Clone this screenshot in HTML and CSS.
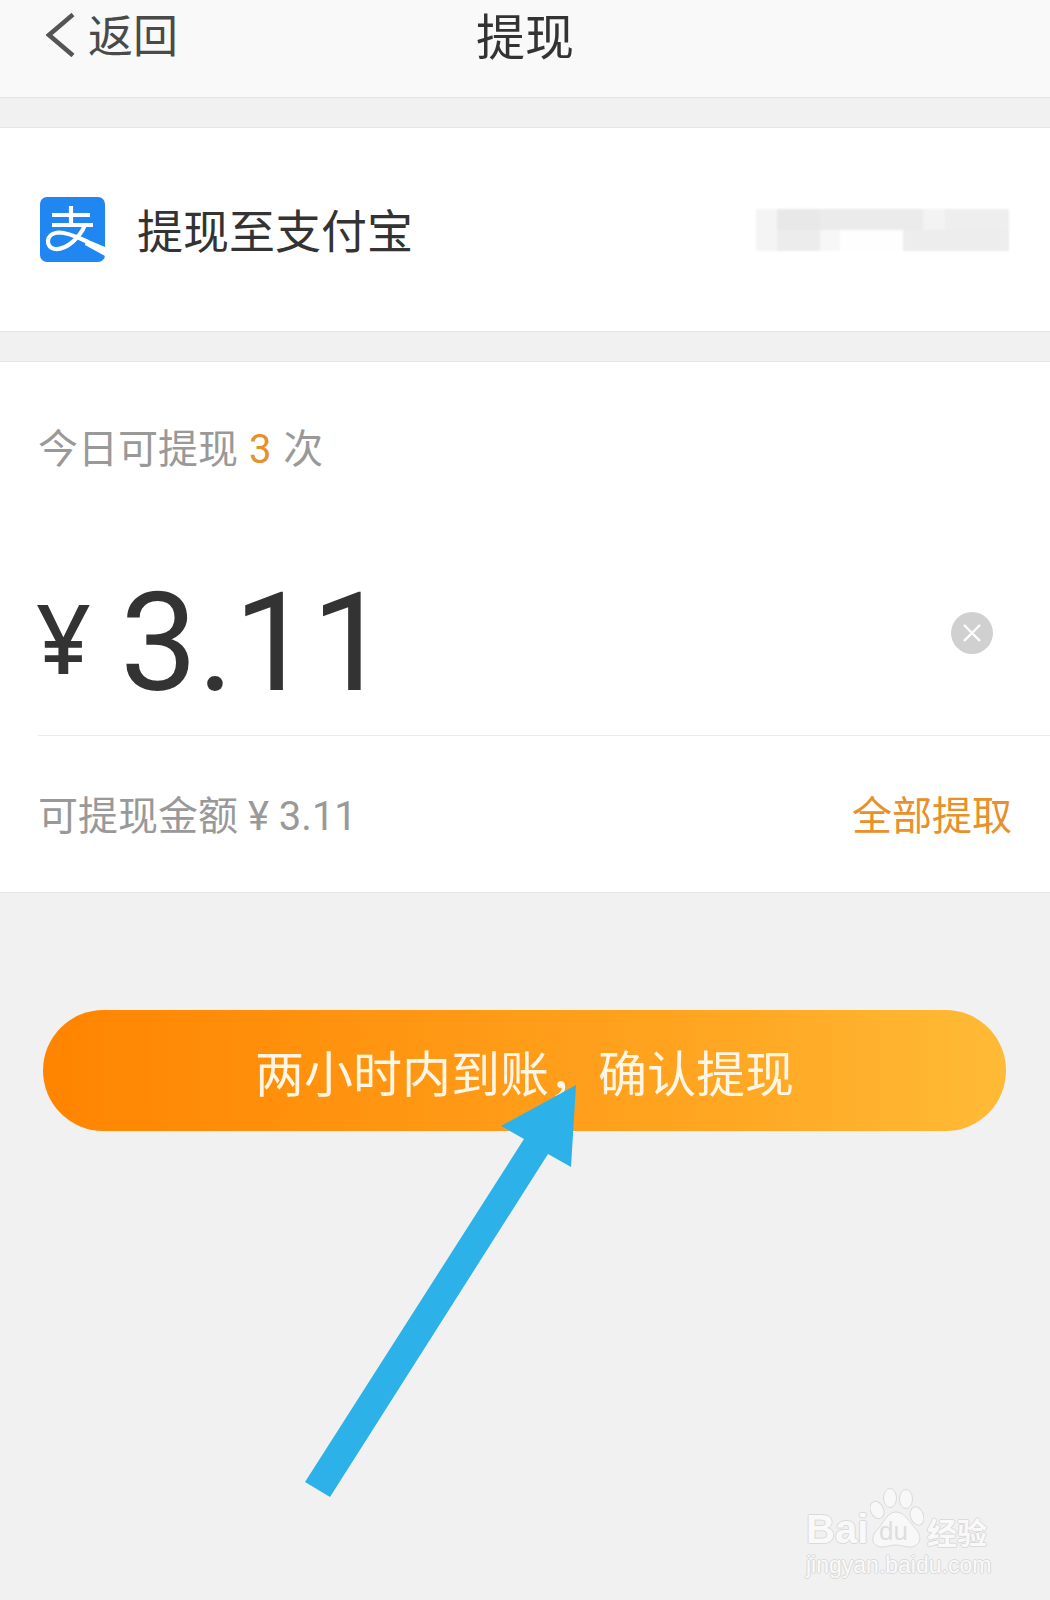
FILE: index.html
```html
<!DOCTYPE html>
<html lang="zh-CN">
<head>
<meta charset="utf-8">
<title>提现</title>
<link rel="stylesheet" href="styles.css">
</head>
<body>
<div class="page">
  <header class="nav">
    <a class="back">
      <svg class="chevron" viewBox="0 0 30 44"><path d="M27 1.5 L3 22 L27 42.5" /></svg>
      <span class="back-text">返回</span>
    </a>
    <h1 class="title">提现</h1>
  </header>

  <section class="card account">
    <svg class="alipay" viewBox="0 0 65 65">
      <rect width="65" height="65" rx="7" fill="#1f86f2"/>
      <g fill="none" stroke="#fff" stroke-width="4.2">
        <path d="M31 9 V27"/>
        <path d="M12 18 H50"/>
        <path d="M12 28 H53"/>
        <path d="M45 28 C40 40 27 53 15 52 C5 51 5 36 19 35.5 C29 35.5 39 41 48 45"/>
      </g>
      <polygon points="46,42 65,50 65,59 45,48" fill="#fff"/>
    </svg>
    <span class="account-label">提现至支付宝</span>
    <div class="smudge"></div>
  </section>

  <section class="card amount">
    <p class="quota">今日可提现 <em>3</em> 次</p>
    <div class="amount-row">
      <span class="yen">¥</span>
      <span class="value">3.11</span>
      <svg class="clear" viewBox="0 0 42 42">
        <circle cx="21" cy="21" r="21" fill="#d0d0d0"/>
        <path d="M13 13 L29 29 M29 13 L13 29" stroke="#fff" stroke-width="2.4" fill="none"/>
      </svg>
    </div>
    <div class="avail-row">
      <span class="avail">可提现金额 ¥ 3.11</span>
      <a class="all">全部提取</a>
    </div>
  </section>

  <div class="action">
    <button class="confirm">两小时内到账，确认提现</button>
  </div>

  <svg class="arrow" viewBox="0 0 1050 1600">
    <polygon points="576,1085 501,1126 524,1139 305,1482 330,1497 548,1154 571,1167" fill="#2cb2e8"/>
  </svg>

  <div class="watermark">
    <div class="wm-top">
      <span class="wm-bai">Bai</span>
      <span class="wm-paw">
        <svg viewBox="0 0 54 60">
          <g fill="#f8f8f8" stroke="#dadada" stroke-width="1">
            <ellipse cx="7" cy="22" rx="6.5" ry="9" transform="rotate(-25 7 22)"/>
            <ellipse cx="20" cy="10" rx="6.5" ry="9.5"/>
            <ellipse cx="36" cy="11" rx="6.5" ry="9.5"/>
            <ellipse cx="47" cy="28" rx="6.5" ry="9.5" transform="rotate(-20 47 28)"/>
            <path d="M26 24 C35 24 39 34 46 41 C53 49 50 59 40 59 C34 59 31 57 26 57 C21 57 17 59 12 59 C2 59 0 49 7 42 C14 35 17 24 26 24 Z"/>
          </g>
        </svg>
        <span class="wm-du">du</span>
      </span>
      <span class="wm-cn">经验</span>
    </div>
    <div class="wm-url">jingyan.baidu.com</div>
  </div>
</div>
</body>
</html>
```

FILE: styles.css
```css
* { box-sizing: border-box; }
html, body { margin: 0; padding: 0; }
body {
  width: 1050px;
  height: 1600px;
  overflow: hidden;
  background: #f1f1f1;
  font-family: Roboto, "Noto Sans CJK SC", sans-serif;
}
.page {
  position: relative;
  height: 1600px;
  background: #f1f1f1;
}
.nav {
  position: relative;
  height: 98px;
  background: #f9f9f9;
  border-bottom: 1px solid #e3e3e3;
  display: flex;
  justify-content: center;
}
.back {
  position: absolute;
  left: 46px;
  top: 12px;
  display: flex;
  align-items: center;
  gap: 12px;
  color: #4a4a4a;
  font-size: 45px;
  line-height: 46px;
}
.back-text { position: relative; top: 3px; }
.chevron { width: 30px; height: 44px; }
.chevron path { fill: none; stroke: #555; stroke-width: 4.5; }
.title {
  margin: 11px 0 0;
  font-size: 49px;
  line-height: 56px;
  font-weight: 400;
  color: #333;
}
.card {
  background: #fff;
  border-top: 1px solid #e6e6e6;
  border-bottom: 1px solid #e6e6e6;
}
.account {
  margin-top: 29px;
  height: 205px;
  display: flex;
  align-items: center;
  padding: 0 41px 0 40px;
}
.alipay { width: 65px; height: 65px; flex: none; margin-top: -1px; }
.account-label {
  margin-left: 32px;
  font-size: 46px;
  line-height: 56px;
  color: #333;
  margin-top: 5px;
}
.smudge {
  margin-left: auto;
  width: 253px;
  height: 42px;
  margin-top: 1px;
  background:
    linear-gradient(90deg, #f4f4f4 0 21px, #ececec 21px 64px, #f7f7f7 64px 84px, #fefefe 84px 147px, #ededed 147px) 0 100% / 100% 21px no-repeat,
    linear-gradient(90deg, #f4f4f4 0 21px, #e8e8e8 21px 64px, #ebebeb 64px 167px, #f3f3f3 167px 189px, #eeeeee 189px) 0 0 / 100% 21px no-repeat;
  filter: blur(0.8px);
}
.amount {
  margin-top: 29px;
  height: 532px;
  padding-left: 38px;
  display: flex;
  flex-direction: column;
}
.quota {
  margin: 60px 0 0;
  height: 56px;
  font-size: 40px;
  line-height: 56px;
  color: #999;
}
.quota em { font-style: normal; color: #e8902a; padding: 0 2px 0 1px; }
.amount-row {
  height: 258px;
  padding-top: 54px;
  display: flex;
  align-items: center;
  border-bottom: 1px solid #ececec;
}
.yen {
  font-family: "Noto Sans", sans-serif;
  font-weight: 500;
  font-size: 96px;
  line-height: 100px;
  color: #333;
  margin-top: 6px;
  margin-left: -2px;
}
.value {
  margin-left: 29px;
  font-size: 138px;
  line-height: 150px;
  color: #333;
  margin-top: 18px;
}
.clear {
  width: 42px;
  height: 42px;
  margin-left: auto;
  margin-right: 57px;
  margin-top: -2px;
}
.avail-row {
  display: flex;
  justify-content: space-between;
  align-items: center;
  padding: 0 38px 2px 0;
  height: 156px;
  font-size: 40px;
}
.avail { color: #999; }
.all { color: #e8902a; }
.action { padding: 117px 44px 0 43px; }
.confirm {
  display: block;
  width: 100%;
  height: 121px;
  border: 0;
  border-radius: 61px;
  background: linear-gradient(90deg, #ff8400 0%, #ffa622 70%, #ffbb36 100%);
  color: #fff6e6;
  font-family: "Noto Sans CJK SC", sans-serif;
  font-size: 49px;
  text-align: center;
}
.arrow {
  position: absolute;
  left: 0;
  top: 0;
  width: 1050px;
  height: 1600px;
  pointer-events: none;
}
.watermark {
  position: absolute;
  left: 806px;
  top: 1488px;
  width: 190px;
}
.wm-top { display: flex; align-items: flex-end; height: 60px; }
.wm-bai, .wm-du, .wm-cn, .wm-url {
  color: #f9f9f9;
  text-shadow: 1px 0 0 #dadada, -1px 0 0 #dadada, 0 1px 0 #dadada, 0 -1px 0 #dadada;
}
.wm-bai {
  font-family: "Liberation Sans", sans-serif;
  font-weight: 700;
  font-size: 40px;
  line-height: 40px;
  width: 64px;
  flex: none;
  margin-bottom: -1px;
}
.wm-paw { position: relative; width: 54px; height: 60px; flex: none; }
.wm-paw svg { width: 54px; height: 60px; display: block; }
.wm-du {
  position: absolute;
  left: 9px;
  bottom: 3px;
  font-family: "Liberation Sans", sans-serif;
  font-size: 26px;
  line-height: 28px;
  text-shadow: none;
  color: #dedede;
}
.wm-cn {
  font-family: "Noto Sans CJK SC", sans-serif;
  font-size: 30px;
  line-height: 34px;
  font-weight: 700;
  margin-left: 3px;
  white-space: nowrap;
}
.wm-url {
  font-family: "Liberation Sans", sans-serif;
  font-size: 23px;
  line-height: 26px;
  margin-top: 4px;
  white-space: nowrap;
}
```
